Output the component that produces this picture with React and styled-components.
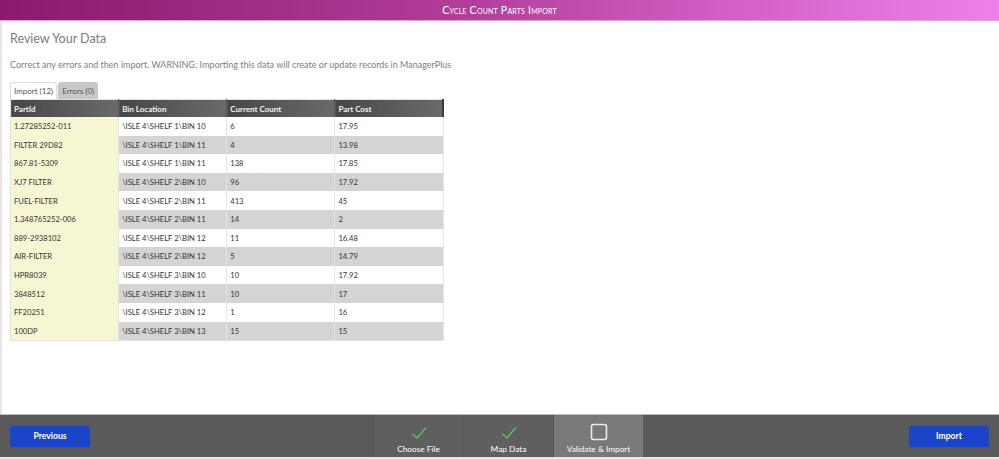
import React from 'react'
import styled, { createGlobalStyle } from 'styled-components'

const GlobalStyle = createGlobalStyle`
  html, body { margin: 0; padding: 0; }
  body { font-family: Lato, "Noto Sans", sans-serif; background: #fff; }
`

const rows = [
  ['1.27285252-011', '\\ISLE 4\\SHELF 1\\BIN 10', '6', '17.95'],
  ['FILTER 29D82', '\\ISLE 4\\SHELF 1\\BIN 11', '4', '13.98'],
  ['867.81-5309', '\\ISLE 4\\SHELF 1\\BIN 11', '138', '17.85'],
  ['XJ7 FILTER', '\\ISLE 4\\SHELF 2\\BIN 10', '96', '17.92'],
  ['FUEL-FILTER', '\\ISLE 4\\SHELF 2\\BIN 11', '413', '45'],
  ['1.348765252-006', '\\ISLE 4\\SHELF 2\\BIN 11', '14', '2'],
  ['889-2938102', '\\ISLE 4\\SHELF 2\\BIN 12', '11', '16.48'],
  ['AIR-FILTER', '\\ISLE 4\\SHELF 2\\BIN 12', '5', '14.79'],
  ['HPR8039', '\\ISLE 4\\SHELF 3\\BIN 10', '10', '17.92'],
  ['3848512', '\\ISLE 4\\SHELF 3\\BIN 11', '10', '17'],
  ['FF20251', '\\ISLE 4\\SHELF 3\\BIN 12', '1', '16'],
  ['100DP', '\\ISLE 4\\SHELF 3\\BIN 13', '15', '15'],
]

const Page = styled.div`
  height: 459px;
  display: flex;
  flex-direction: column;
`

const Header = styled.div`
  height: 20px;
  border-bottom: 1px solid #e9a0e0;
  background: linear-gradient(90deg, #8a1a6c 0%, #b03c98 45%, #d462c8 75%, #ef80ea 100%);
  color: #fff;
  display: flex;
  align-items: center;
  justify-content: center;
  font-size: 10.6px;
  font-variant: small-caps;
  letter-spacing: 0.2px;
`

const Content = styled.div`
  flex: 1;
  border-left: 2px solid #e6e6e6;
  padding: 0 0 0 8px;
`

const Title = styled.h2`
  margin: 0;
  padding-top: 10px;
  font-size: 12.5px;
  font-weight: 400;
  color: #7b7b7b;
  line-height: 15px;
`

const Note = styled.p`
  margin: 0;
  padding-top: 13px;
  font-size: 9px;
  color: #808080;
  line-height: 11px;
`

const Tabs = styled.div`
  display: flex;
  gap: 1px;
  margin-top: 12px;
`

const Tab = styled.div`
  height: 17px;
  padding: 0 3px;
  display: flex;
  align-items: center;
  font-size: 8px;
  color: #555;
  border: 1px solid ${(p) => (p.active ? '#ddd' : '#c2c2c2')};
  border-bottom: none;
  border-radius: 3px 3px 0 0;
  background: ${(p) => (p.active ? '#fff' : '#c8c8c8')};
  box-sizing: border-box;
`

const Table = styled.table`
  border-collapse: collapse;
  width: 434px;
  table-layout: fixed;
  border: 1px solid #e2e2e2;
  font-size: 7.6px;
`

const Th = styled.th`
  height: 17px;
  padding: 0 3px;
  text-align: left;
  font-size: 8px;
  font-weight: 700;
  color: #f2f2f2;
  background: linear-gradient(90deg, #474747, #6a6a6a);
  border-right: 1px solid #555;
  &:last-child { border-right: 2px solid #3a3a3a; }
`

const Td = styled.td`
  height: 18.6px;
  padding: 0 3px;
  color: #333;
  background: ${(p) => (p.first ? '#f7f6d2' : p.odd ? '#d4d4d4' : '#fff')};
  border-right: 1px solid #e4e4e4;
  white-space: nowrap;
  overflow: hidden;
`

const Footer = styled.div`
  height: 42px;
  border-top: 1px solid #bdbdbd;
  border-bottom: 2px solid #e8e8e8;
  background: #5a5a5a;
  display: grid;
  grid-template-columns: 1fr auto 1fr;
  align-items: center;
  padding: 0 10px;
`

const Button = styled.button`
  width: 80px;
  height: 21px;
  border: none;
  border-radius: 2px;
  background: #1a45c9;
  color: #fff;
  font-family: inherit;
  font-weight: 700;
  font-size: 8.6px;
  justify-self: ${(p) => (p.right ? 'end' : 'start')};
`

const Steps = styled.div`
  display: flex;
  height: 42px;
  margin-left: 17px;
`

const Step = styled.div`
  width: 90px;
  background: ${(p) => (p.active ? '#797979' : '#5f5f5f')};
  border-left: 1px solid #545454;
  display: flex;
  flex-direction: column;
  align-items: center;
  justify-content: flex-end;
  padding-bottom: 3px;
  box-sizing: border-box;
  color: #fff;
  font-size: 8.3px;
  gap: 3px;
`

const Check = () => (
  <svg width="18" height="16" viewBox="0 0 18 16">
    <path d="M2 8.5 L7 13 L16 2.5" fill="none" stroke="#4fbf4f" strokeWidth="1.6" />
  </svg>
)

const Box = () => (
  <svg width="18" height="18" viewBox="0 0 18 18">
    <rect x="1.5" y="1.5" width="15" height="15" rx="2" fill="none" stroke="#f0f0f0" strokeWidth="1.5" />
  </svg>
)

export default function App() {
  return (
    <Page>
      <GlobalStyle />
      <Header>Cycle Count Parts Import</Header>
      <Content>
        <Title>Review Your Data</Title>
        <Note>Correct any errors and then import. WARNING: Importing this data will create or update records in ManagerPlus</Note>
        <Tabs>
          <Tab active>Import (12)</Tab>
          <Tab>Errors (0)</Tab>
        </Tabs>
        <Table>
          <thead>
            <tr>
              <Th>PartId</Th>
              <Th>Bin Location</Th>
              <Th>Current Count</Th>
              <Th>Part Cost</Th>
            </tr>
          </thead>
          <tbody>
            {rows.map((r, i) => (
              <tr key={i}>
                {r.map((c, j) => (
                  <Td key={j} first={j === 0} odd={i % 2 === 1}>{c}</Td>
                ))}
              </tr>
            ))}
          </tbody>
        </Table>
      </Content>
      <Footer>
        <Button>Previous</Button>
        <Steps>
          <Step><Check />Choose File</Step>
          <Step><Check />Map Data</Step>
          <Step active><Box />Validate &amp; Import</Step>
        </Steps>
        <Button right>Import</Button>
      </Footer>
    </Page>
  )
}
